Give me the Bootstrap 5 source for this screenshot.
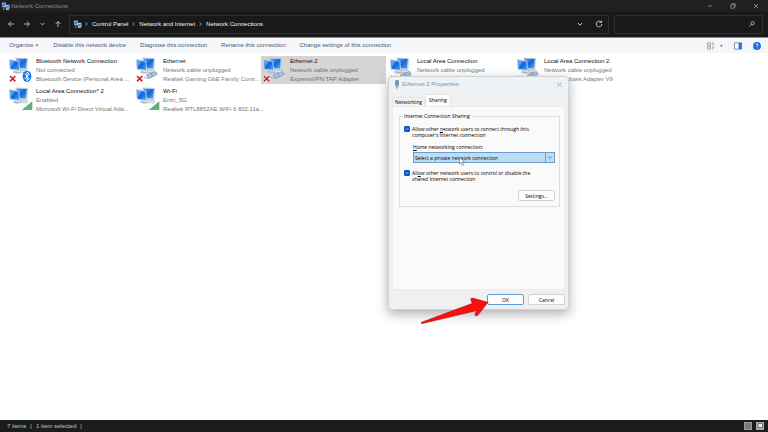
<!DOCTYPE html>
<html lang="en">
<head>
<meta charset="utf-8">
<meta name="viewport" content="width=device-width, initial-scale=1">
<title>Network Connections</title>
<link href="https://cdn.jsdelivr.net/npm/bootstrap@5.3.0/dist/css/bootstrap.min.css" rel="stylesheet">
<style>
body{font-family:"Liberation Sans",Arial,sans-serif;font-size:6px;line-height:9px;background:#fff;color:#333}
button,input,select{font-size:inherit;line-height:inherit;font-family:inherit}
svg{display:block;flex:none}
.plain{border:0;background:none;padding:0;color:inherit;display:block}
.titlebar{height:12px;background:#202020;color:#8d8d8d;padding:0 9px 0 1px}
.titlebar span{padding-left:1px}
.wincontrols{gap:17px}
.navrow{height:25px;background:#191919;color:#d8d8d8;padding:2px 5px 3px 8px;gap:5px}
.navbuttons{width:56px;padding-right:3px}
.fieldbox{background:#191919;border:1px solid #303030;border-radius:1px;height:19px}
.address{flex:39 1 0;padding:0 5px 0 3px}
.addresstools{gap:12px}
.search{flex:10 1 0;padding:0 7px 0 4px}
.search input{background:none;border:0;outline:0;color:#ddd;min-width:0;padding:0}
.crumb{color:#f4f4f4;text-decoration:none}
.crumbs{gap:4px;padding-left:3px}
.commands{height:16px;background:#f5f6f8;border-top:1px solid #8a8a8a;color:#3f5a7a;padding:0 7px 0 9px;gap:14px}
.organize{gap:2px}
.tools{gap:11px}
.items{display:grid;grid-template-columns:repeat(auto-fill,125px);gap:2px;padding:3px 10px 3px 7px}
.conn{height:28px;padding:1px 0 0 29px;color:#787878;white-space:nowrap}
.conn.selected{background:#d5d5d5;color:#707070}
.conn strong{font-weight:400;color:#111;display:block}
.connicon{position:absolute;left:2px;top:0;width:26px;height:28px}
.status{height:12px;background:#1c1c1c;color:#c4c4c4;padding:0 4px 0 7px;gap:4px}
.views{gap:4px}
.dialogbox{position:absolute;left:388px;top:76px;width:181px;background:#f0f0f0;border:1px solid #cfd3d6;border-radius:4px;box-shadow:0 4px 12px rgba(0,0,0,.32);padding:0 3px 4px}
.dialoghead{height:15px;margin:0 -3px;padding:0 6px 0 5px;background:#ebf3f8;border-radius:4px 4px 0 0;color:#8a9198;gap:2px}
.small5{font-family:"Open Sans","Noto Sans",sans-serif;font-size:5px;line-height:6px;color:#000}
.nav-tabs.proptabs{border:0;padding-top:2px;align-items:flex-end}
.proptabs .nav-link{border:1px solid #e6e6e6;border-bottom:0;border-radius:0;margin:0;padding:1px 2px;color:#000;font-size:5px;line-height:6px;background:#f2f2f2;height:9px}
.proptabs .nav-link.active{background:#fbfbfb;height:12px;color:#000;padding:1px 3px 3px;border-color:#e6e6e6}
.pane{background:#fafafa;border:1px solid #ececec;padding:6px 4px 82px 6px}
.group{border:1px solid #dedede;padding:7px 4px 5px;margin:0}
.group legend{float:none;width:auto;font-size:5px;line-height:6px;margin:0 0 0 -2px;padding:0 2px}
.tick{display:flex;gap:2px;padding:0;margin:0;min-height:0}
.tick .form-check-input{float:none;margin:0;width:6px;height:6px;border-radius:1px;flex:none;border-color:#0b5cc4}
.tick .form-check-input:checked{background-color:#0b5cc4}
.pick{margin:6px 0 7px 9px}
.pick label{display:block;margin-bottom:2px}
.pick .form-select{font-size:5px;line-height:6px;height:11px;min-height:0;border:1px solid #6c9ccb;border-radius:0;padding:1px 12px 1px 1px;color:#000;background-color:#bfdcf5;background-image:url("data:image/svg+xml,%3Csvg xmlns='http://www.w3.org/2000/svg' viewBox='0 0 10 10'%3E%3Cpath d='M.5 0v10' stroke='%236c8fb3'/%3E%3Cpath d='M3.5 4l2 2 2-2' fill='none' stroke='%23496b8f'/%3E%3C/svg%3E");background-position:right center;background-size:9px 9px}
.dlgbtn{width:37px;height:11px;padding:0;font-family:inherit;font-size:5px;line-height:6px;background:#fdfdfd;border:1px solid #d2d2d2;border-radius:2px;color:#000}
.dlgbtn.primary{border-color:#5b9bdc}
.pointerarrow{position:absolute;left:420px;top:296px;width:70px;height:30px}
.cursor{position:absolute;left:459px;top:157px;width:6px;height:9px}
</style>
<script src="https://cdn.jsdelivr.net/npm/bootstrap@5.3.0/dist/js/bootstrap.bundle.min.js" defer></script>
</head>
<body class="d-flex flex-column min-vh-100 position-relative overflow-hidden">
<svg width="0" height="0" class="position-absolute" aria-hidden="true">
  <defs>
    <linearGradient id="scr" x1="0" y1="0" x2="1" y2="1"><stop offset="0" stop-color="#55aaf6"/><stop offset=".5" stop-color="#1363e0"/><stop offset="1" stop-color="#4fb0f4"/></linearGradient>
    <symbol id="pcs" viewBox="0 0 78 84">
      <path d="M20 5l36 2-2 34-28-1z" fill="#c3d2e2" stroke="#9fb2c6"/>
      <path d="M23 8l30 1-2 28-26-1z" fill="url(#scr)"/>
      <path d="M30 40l20 1 7 8-18 2z" fill="#c5ccd5"/>
      <path d="M0 10l30 5 4 31-31-5z" fill="#d2deea" stroke="#a5b6c8"/>
      <path d="M2 12l26 5 3 25-26-4z" fill="url(#scr)"/>
      <path d="M2 12l14 3-10 18z" fill="#6db8fa" opacity=".6"/>
      <path d="M17 45l14 2 8 4-16 2-12-4z" fill="#b3bdc9"/>
      <path d="M37 41l21 4-5 7-20-4z" fill="#dce3ea" stroke="#98a6b5"/>
    </symbol>
    <symbol id="cross" viewBox="0 0 78 84"><path d="M4 60l15 16M19 59L4 77" stroke="#fff" stroke-width="8"/><path d="M3 60l16 16M19 60L3 76" stroke="#df1f26" stroke-width="5"/></symbol>
    <symbol id="plug" viewBox="0 0 78 84"><path d="M24 62q4 9 13 2" fill="none" stroke="#8da2b8" stroke-width="3"/><path d="M31 57l15-7 6 11-14 7z" fill="#a9c1da" stroke="#6e8cac" stroke-width="2"/><path d="M45 52l14-5 5 8-14 7z" fill="#c8daeb" stroke="#6e8cac" stroke-width="2"/><path d="M48 55l12-5M50 58l12-5" stroke="#5e83aa"/></symbol>
    <symbol id="signal" viewBox="0 0 78 84"><path d="M38 72L70 46v26z" fill="#62ab7c"/><path d="M46 66v6M54 60v12M62 53v19" stroke="#86c49b"/></symbol>
    <symbol id="blue" viewBox="0 0 78 84"><ellipse cx="54" cy="61" rx="13" ry="17" fill="#1476e4"/><path d="M47 53l14 15-7 6V48l7 6-14 15" fill="none" stroke="#fff" stroke-width="3"/></symbol>
    <symbol id="mini" viewBox="0 0 24 24"><path d="M2 2l11-1 1 11-10 2z" fill="#a9cbef"/><path d="M4 4l8-1 1 7-8 2z" fill="#2b7cdc"/><path d="M11 8l11-1 1 10-10 1z" fill="#d8e8f8"/><path d="M13 10l8-1v6l-7 1z" fill="#2b86ea"/><path d="M5 14h4v7H5z" fill="#cf4b3c"/><path d="M14 18h6l2 3h-9z" fill="#b7c4cf"/></symbol>
  </defs>
</svg>

<header>
  <div class="titlebar d-flex align-items-center">
    <svg width="9" height="9"><use href="#mini"/></svg>
    <span>Network Connections</span>
    <div class="wincontrols d-flex align-items-center ms-auto">
      <button class="plain" aria-label="Minimize"><svg width="6" height="6" viewBox="0 0 6 6"><path d="M1 3h4" stroke="#8b8b8b" stroke-width=".8"/></svg></button>
      <button class="plain" aria-label="Restore"><svg width="6" height="6" viewBox="0 0 6 6" fill="none" stroke="#969696" stroke-width=".8"><path d="M.8 1.8h3.4v3.4H.8zM2 1.5V.7h3.2v3.3h-.8"/></svg></button>
      <button class="plain" aria-label="Close"><svg width="6" height="6" viewBox="0 0 6 6"><path d="M1 1l4 4M5 1L1 5" stroke="#999" stroke-width=".8"/></svg></button>
    </div>
  </div>
  <div class="navrow d-flex align-items-center">
    <nav class="navbuttons d-flex justify-content-between align-items-center" aria-label="History">
      <button class="plain" aria-label="Back"><svg width="6" height="6" viewBox="0 0 6 6" fill="none" stroke="currentColor" stroke-width=".8"><path d="M6 3H.6M3 .7L.6 3 3 5.3"/></svg></button>
      <button class="plain" aria-label="Forward"><svg width="6" height="6" viewBox="0 0 6 6" fill="none" stroke="currentColor" stroke-width=".8"><path d="M0 3h5.4M3 .7L5.4 3 3 5.3"/></svg></button>
      <button class="plain" aria-label="Recent"><svg width="5" height="6" viewBox="0 0 5 6" fill="none" stroke="currentColor" stroke-width=".8"><path d="M.6 2l1.9 2 1.9-2"/></svg></button>
      <button class="plain" aria-label="Up"><svg width="6" height="6" viewBox="0 0 6 6" fill="none" stroke="currentColor" stroke-width=".8"><path d="M3 6V.6M.7 3L3 .6 5.3 3"/></svg></button>
    </nav>
    <div class="fieldbox address d-flex align-items-center">
      <svg width="9" height="9"><use href="#mini"/></svg>
      <nav class="crumbs d-flex align-items-center" aria-label="Path">
        <svg width="3" height="4" viewBox="0 0 3 4" fill="none" stroke="#ccc" stroke-width=".7"><path d="M.8.4L2.200 2 .8 3.6"/></svg>
        <a class="crumb" href="#">Control Panel</a>
        <svg width="3" height="4" viewBox="0 0 3 4" fill="none" stroke="#ccc" stroke-width=".7"><path d="M.8.4L2.200 2 .8 3.6"/></svg>
        <a class="crumb" href="#">Network and Internet</a>
        <svg width="3" height="4" viewBox="0 0 3 4" fill="none" stroke="#ccc" stroke-width=".7"><path d="M.8.4L2.200 2 .8 3.6"/></svg>
        <a class="crumb" href="#">Network Connections</a>
      </nav>
      <div class="addresstools d-flex align-items-center ms-auto">
        <button class="plain" aria-label="Previous locations"><svg width="6" height="6" viewBox="0 0 6 6" fill="none" stroke="currentColor"><path d="M.8 2L3 4.2 5.2 2"/></svg></button>
        <button class="plain" aria-label="Refresh"><svg width="8" height="8" viewBox="0 0 8 8" fill="none" stroke="currentColor" stroke-width=".9"><path d="M6.8 4A2.8 2.8 0 1 1 5.7 1.8M6.6.5v2H4.7"/></svg></button>
      </div>
    </div>
    <div class="fieldbox search d-flex align-items-center">
      <input class="flex-grow-1" type="search" aria-label="Search">
      <svg width="6" height="6" viewBox="0 0 6 6" fill="none" stroke="#ccc" stroke-width=".8"><circle cx="3.6" cy="2.3" r="1.6"/><path d="M2.4 3.5L.5 5.5"/></svg>
    </div>
  </div>
  <div class="commands d-flex align-items-center">
    <button class="plain organize d-flex align-items-center">Organize<svg width="4" height="3" viewBox="0 0 4 3"><path d="M.5.6h3L2 2.400z" fill="#4c6582"/></svg></button>
    <button class="plain">Disable this network device</button>
    <button class="plain">Diagnose this connection</button>
    <button class="plain">Rename this connection</button>
    <button class="plain">Change settings of this connection</button>
    <div class="tools d-flex align-items-center ms-auto">
      <button class="plain d-flex align-items-center" aria-label="View"><svg width="16" height="8" viewBox="0 0 16 8" fill="none" stroke="#7c8389" stroke-width=".7"><path d="M.5.8h3v2.5h-3zM.5 4.7h3v2.5h-3zM5 1.2h2.2M5 2.8h1.6M5 5.2h2.2M5 6.8h1.6"/><path d="M13 3.2h3L14.500 5z" fill="#4c6582" stroke="none"/></svg></button>
      <button class="plain" aria-label="Preview pane"><svg width="8" height="8" viewBox="0 0 8 8"><path d="M.5.9h7v6.200h-7z" fill="#fff" stroke="#5a7da3" stroke-width=".8"/><path d="M4.600.9h2.900v6.200H4.600z" fill="#1673e6"/></svg></button>
      <button class="plain" aria-label="Help"><svg width="8" height="8" viewBox="0 0 8 8"><circle cx="4" cy="4" r="3.900" fill="#126be0"/><path d="M2.900 3q.1-1.200 1.100-1.200T5.100 2.900Q5.100 3.600 4 4.300V5M4 5.600v.8" fill="none" stroke="#fff" stroke-width=".8"/></svg></button>
    </div>
  </div>
</header>

<main class="flex-grow-1">
  <div class="items">
    <div class="conn position-relative"><svg class="connicon"><use href="#pcs"/><use href="#cross"/><use href="#blue"/></svg><strong>Bluetooth Network Connection</strong>Not connected<div>Bluetooth Device (Personal Area ...</div></div>
    <div class="conn position-relative"><svg class="connicon"><use href="#pcs"/><use href="#cross"/><use href="#plug"/></svg><strong>Ethernet</strong>Network cable unplugged<div>Realtek Gaming GbE Family Contr...</div></div>
    <div class="conn selected position-relative"><svg class="connicon"><use href="#pcs"/><use href="#cross"/><use href="#plug"/></svg><strong>Ethernet 2</strong>Network cable unplugged<div>ExpressVPN TAP Adapter</div></div>
    <div class="conn position-relative"><svg class="connicon"><use href="#pcs"/><use href="#cross"/><use href="#plug"/></svg><strong>Local Area Connection</strong>Network cable unplugged</div>
    <div class="conn position-relative"><svg class="connicon"><use href="#pcs"/><use href="#cross"/><use href="#plug"/></svg><strong>Local Area Connection 2</strong>Network cable unplugged<div>TAP-Windows Adapter V9</div></div>
    <div class="conn position-relative"><svg class="connicon"><use href="#pcs"/><use href="#signal"/></svg><strong>Local Area Connection* 2</strong>Enabled<div>Microsoft Wi-Fi Direct Virtual Ada...</div></div>
    <div class="conn position-relative"><svg class="connicon"><use href="#pcs"/><use href="#signal"/></svg><strong>Wi-Fi</strong>Entri_5G<div>Realtek RTL8852AE WiFi 6 802.11a...</div></div>
  </div>
</main>

<footer class="status d-flex align-items-center">
  <span>7 items</span><span>|</span><span>1 item selected</span><span>|</span>
  <div class="views d-flex ms-auto">
    <button class="plain" aria-label="Details view"><svg width="8" height="8" viewBox="0 0 8 8"><path d="M0 0h8v8H0z" fill="#9a9a9a"/><path d="M1 2h6M1 4h6M1 6h6" stroke="#4c4c4c" stroke-width=".8"/></svg></button>
    <button class="plain" aria-label="Icons view"><svg width="8" height="8" viewBox="0 0 8 8"><path d="M0 0h8v8H0z" fill="#a9a9a9"/><path d="M2 1.700h4.500v3.500H2z" fill="#fff" stroke="#555" stroke-width=".8"/></svg></button>
  </div>
</footer>

<section class="dialogbox" role="dialog" aria-label="Ethernet 2 Properties">
  <div class="dialoghead d-flex align-items-center">
    <svg width="6" height="9" viewBox="0 0 6 9"><path d="M1.500.5h3v5l-1 1.500h-1l-1-1.500z" fill="#9bb5ce" stroke="#6b86a3" stroke-width=".7"/><path d="M2.500 1.500v3M3.500 1.500v3M3 7v2" stroke="#496d94" stroke-width=".6"/></svg>
    <span>Ethernet 2 Properties</span>
    <button class="plain ms-auto" aria-label="Close dialog"><svg width="5" height="5" viewBox="0 0 5 5"><path d="M.3.3l4.400 4.400M4.700.3L.3 4.700" stroke="#909499" stroke-width=".7"/></svg></button>
  </div>
  <ul class="nav nav-tabs proptabs small5" role="tablist">
    <li class="nav-item"><button class="nav-link" role="tab">Networking</button></li>
    <li class="nav-item"><button class="nav-link active" role="tab" aria-selected="true">Sharing</button></li>
  </ul>
  <div class="pane small5">
    <fieldset class="group">
      <legend>Internet Connection Sharing</legend>
      <div class="form-check tick"><input class="form-check-input" type="checkbox" id="allowConnect" checked><label for="allowConnect">Allow other <u>n</u>etwork users to connect through this<br>computer's Internet connection</label></div>
      <div class="pick"><label for="home"><u>H</u>ome networking connection:</label>
        <select class="form-select" id="home"><option>Select a private network connection</option></select></div>
      <div class="form-check tick"><input class="form-check-input" type="checkbox" id="allowControl" checked><label for="allowControl">All<u>o</u>w other network users to control or disable the<br>shared Internet connection</label></div>
      <div class="d-flex justify-content-end pt-2"><button class="btn dlgbtn">Settings...</button></div>
    </fieldset>
  </div>
  <div class="d-flex justify-content-end gap-1 pt-1 small5"><button class="btn dlgbtn primary">OK</button><button class="btn dlgbtn">Cancel</button></div>
</section>

<svg class="cursor" viewBox="0 0 12 18" aria-hidden="true"><path d="M1 1v13l3-3 2.500 6 2.500-1-2.500-6H11z" fill="#fff" stroke="#555"/></svg>
<svg class="pointerarrow" viewBox="0 0 210 90" aria-hidden="true"><path d="M4 79L157 22q-5-9-5-14 4-3 9-1l43 12q-15 20-30 38-5 5-9 1-2-3 5-14L5 83z" fill="#f80f0f" stroke="#9c1c16" stroke-width="1.500"/></svg>
</body>
</html>
